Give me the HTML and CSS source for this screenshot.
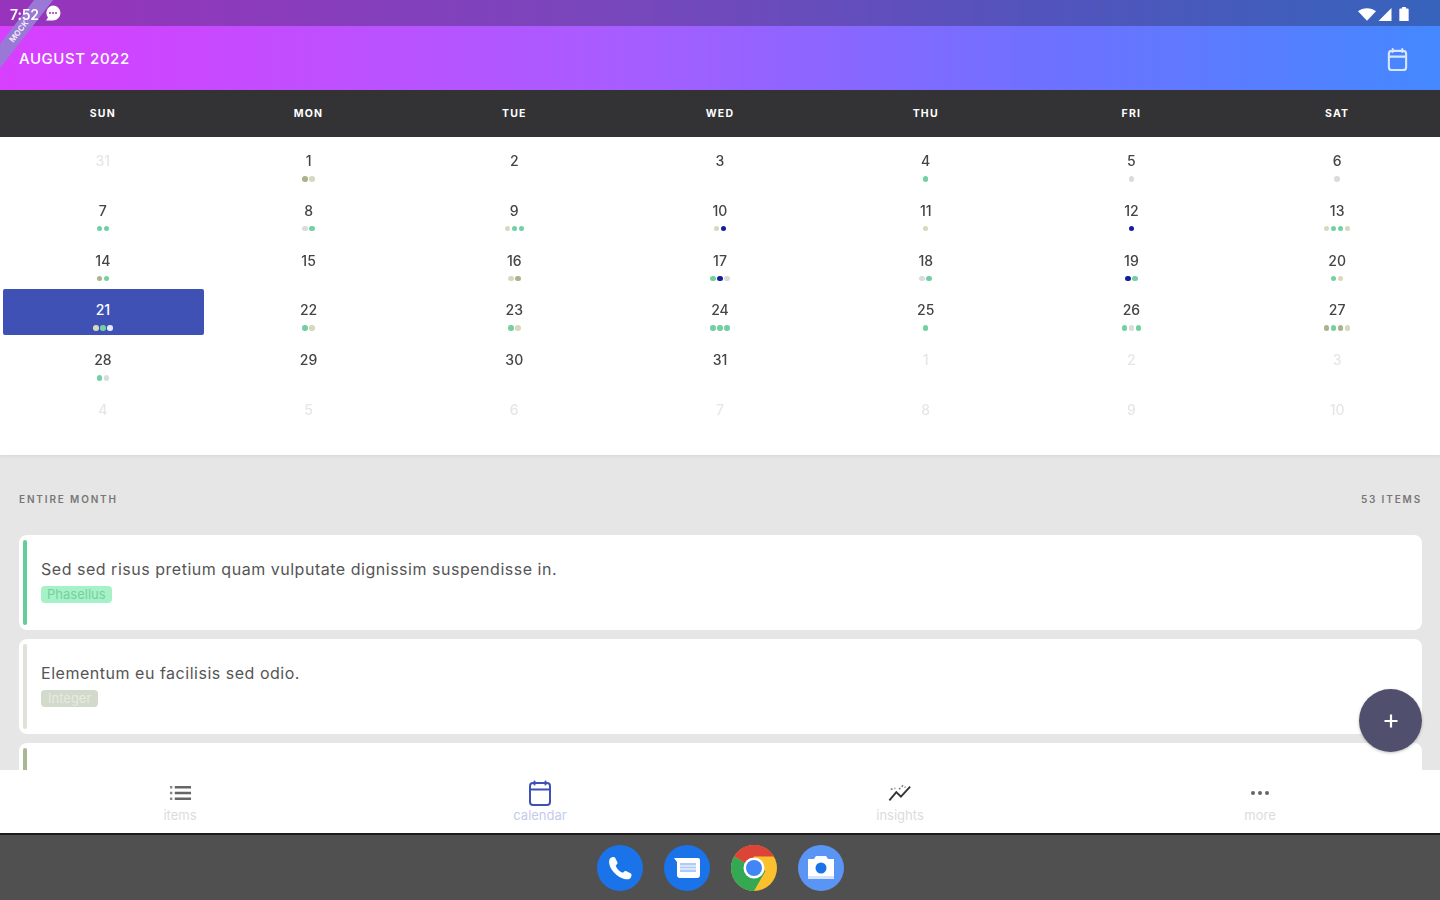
FILE: index.html
```html
<!DOCTYPE html>
<html lang="en">
<head>
<meta charset="utf-8">
<title>Calendar</title>
<link rel="stylesheet" href="styles.css">
</head>
<body>
<div class="screen">
  <header class="top">
    <div class="status">
      <div class="status-left">
        <span class="time">7:52</span>
        <svg class="msg" viewBox="0 0 18 18"><path d="M9 1.5a7.5 7.5 0 0 1 0 15H2l2-3A7.5 7.5 0 0 1 9 1.5z" fill="#fff"/><circle cx="6" cy="9" r="1" fill="#9a35b0"/><circle cx="9" cy="9" r="1" fill="#9a35b0"/><circle cx="12" cy="9" r="1" fill="#9a35b0"/></svg>
      </div>
      <div class="status-right">
        <svg class="st-wifi" viewBox="0 0 20 14"><path d="M0 3.5C5.500-1 14.500-1 20 3.500L10 14z" fill="#fff"/></svg>
        <svg class="st-signal" viewBox="0 0 14 14"><path d="M14 0v14H0z" fill="#fff"/></svg>
        <svg class="st-batt" viewBox="0 0 10 15"><path d="M3 0h4v1.500h2a1 1 0 0 1 1 1V15H0V2.500a1 1 0 0 1 1-1h2z" fill="#fff"/></svg>
      </div>
    </div>
    <div class="appbar">
      <h1 class="month">AUGUST 2022</h1>
      <svg class="cal-icon" viewBox="0 0 24 26"><path d="M3 7a3 3 0 0 1 3-3h12a3 3 0 0 1 3 3v14a3 3 0 0 1-3 3H6a3 3 0 0 1-3-3zM3 10h18M7 2v3M17 2v3" fill="none" stroke="#d8e6ff" stroke-width="2.200" stroke-linecap="round"/></svg>
    </div>
  </header>
  <div class="ribbon"><span>MOCK</span></div>

  <div class="weekdays">
    <span>SUN</span><span>MON</span><span>TUE</span><span>WED</span><span>THU</span><span>FRI</span><span>SAT</span>
  </div>

  <section class="calendar">
    <div class="day off"><b>31</b></div>
    <div class="day"><b>1</b><i class="dots"><u class="o"></u><u class="p"></u></i></div>
    <div class="day"><b>2</b></div>
    <div class="day"><b>3</b></div>
    <div class="day"><b>4</b><i class="dots"><u class="g"></u></i></div>
    <div class="day"><b>5</b><i class="dots"><u class="s"></u></i></div>
    <div class="day"><b>6</b><i class="dots"><u class="s"></u></i></div>

    <div class="day"><b>7</b><i class="dots"><u class="g"></u><u class="g"></u></i></div>
    <div class="day"><b>8</b><i class="dots"><u class="s"></u><u class="g"></u></i></div>
    <div class="day"><b>9</b><i class="dots"><u class="p"></u><u class="g"></u><u class="g"></u></i></div>
    <div class="day"><b>10</b><i class="dots"><u class="p"></u><u class="n"></u></i></div>
    <div class="day"><b>11</b><i class="dots"><u class="p"></u></i></div>
    <div class="day"><b>12</b><i class="dots"><u class="n"></u></i></div>
    <div class="day"><b>13</b><i class="dots"><u class="p"></u><u class="g"></u><u class="g"></u><u class="p"></u></i></div>

    <div class="day"><b>14</b><i class="dots"><u class="o"></u><u class="g"></u></i></div>
    <div class="day"><b>15</b></div>
    <div class="day"><b>16</b><i class="dots"><u class="p"></u><u class="o"></u></i></div>
    <div class="day"><b>17</b><i class="dots"><u class="g"></u><u class="n"></u><u class="s"></u></i></div>
    <div class="day"><b>18</b><i class="dots"><u class="s"></u><u class="g"></u></i></div>
    <div class="day"><b>19</b><i class="dots"><u class="n"></u><u class="g"></u></i></div>
    <div class="day"><b>20</b><i class="dots"><u class="g"></u><u class="p"></u></i></div>

    <div class="day selected"><b>21</b><i class="dots"><u class="p"></u><u class="g"></u><u class="w"></u></i></div>
    <div class="day"><b>22</b><i class="dots"><u class="g"></u><u class="p"></u></i></div>
    <div class="day"><b>23</b><i class="dots"><u class="g"></u><u class="p"></u></i></div>
    <div class="day"><b>24</b><i class="dots"><u class="g"></u><u class="g"></u><u class="g"></u></i></div>
    <div class="day"><b>25</b><i class="dots"><u class="g"></u></i></div>
    <div class="day"><b>26</b><i class="dots"><u class="g"></u><u class="s"></u><u class="g"></u></i></div>
    <div class="day"><b>27</b><i class="dots"><u class="o"></u><u class="g"></u><u class="o"></u><u class="p"></u></i></div>

    <div class="day"><b>28</b><i class="dots"><u class="g"></u><u class="s"></u></i></div>
    <div class="day"><b>29</b></div>
    <div class="day"><b>30</b></div>
    <div class="day"><b>31</b></div>
    <div class="day off"><b>1</b></div>
    <div class="day off"><b>2</b></div>
    <div class="day off"><b>3</b></div>

    <div class="day off"><b>4</b></div>
    <div class="day off"><b>5</b></div>
    <div class="day off"><b>6</b></div>
    <div class="day off"><b>7</b></div>
    <div class="day off"><b>8</b></div>
    <div class="day off"><b>9</b></div>
    <div class="day off"><b>10</b></div>
  </section>

  <section class="list">
    <div class="list-head"><span>ENTIRE MONTH</span><span>53 ITEMS</span></div>
    <article class="card">
      <div class="bar bar-green"></div>
      <div class="card-body">
        <p class="card-text">Sed sed risus pretium quam vulputate dignissim suspendisse in.</p>
        <span class="tag tag-green">Phasellus</span>
      </div>
    </article>
    <article class="card">
      <div class="bar bar-pale"></div>
      <div class="card-body">
        <p class="card-text">Elementum eu facilisis sed odio.</p>
        <span class="tag tag-pale">Integer</span>
      </div>
    </article>
    <article class="card">
      <div class="bar bar-olive"></div>
    </article>
  </section>

  <button class="fab" aria-label="add"><svg viewBox="0 0 16 16"><path d="M8 1.500v13M1.500 8h13" stroke="#fff" stroke-width="2.200" fill="none"/></svg></button>

  <nav class="nav">
    <div class="nav-item">
      <svg class="nav-list" viewBox="0 0 24 18"><path d="M6 3h17M6 9h17M6 15h17" stroke="#666" stroke-width="2.600"/><path d="M1 3h2.500M1 9h2.500M1 15h2.500" stroke="#888" stroke-width="2.600"/></svg>
      <span>items</span>
    </div>
    <div class="nav-item active">
      <svg class="nav-cal" viewBox="0 0 24 26"><path d="M2 6a3 3 0 0 1 3-3h14a3 3 0 0 1 3 3v16a3 3 0 0 1-3 3H5a3 3 0 0 1-3-3zM2 9.500h20M6.500 1.500v3M17.500 1.500v3" fill="none" stroke="#3f51b5" stroke-width="2" stroke-linecap="round"/></svg>
      <span>calendar</span>
    </div>
    <div class="nav-item">
      <svg viewBox="0 0 26 20"><path d="M1.500 18L9 9l5 5 10-11" fill="none" stroke="#333" stroke-width="2"/><path d="M3 6l5-1M12 6l4-4 3 2" fill="none" stroke="#777" stroke-width="1.600" stroke-dasharray="2 2"/></svg>
      <span>insights</span>
    </div>
    <div class="nav-item">
      <svg viewBox="0 0 24 18"><circle cx="5" cy="9" r="2" fill="#666"/><circle cx="12" cy="9" r="2" fill="#666"/><circle cx="19" cy="9" r="2" fill="#666"/></svg>
      <span>more</span>
    </div>
  </nav>

  <footer class="dock">
    <svg class="app" viewBox="0 0 46 46"><circle cx="23" cy="23" r="23" fill="#1a73e8"/><path d="M13 13.500c1-1.500 4-2 5-1l2.500 5c.3 1-.5 2-1.800 3 1 3.500 3.800 6.300 7.300 7.300 1-1.300 2-2 3-1.800l5 2.500c1 1 .5 4-1 5-2 1.500-6 1-10.500-1.500-4-2.500-7.500-6-9.500-10.500C11.800 18 11.800 15 13 13.500z" fill="#fff"/></svg>
    <svg class="app" viewBox="0 0 46 46"><circle cx="23" cy="23" r="23" fill="#1a73e8"/><path d="M10 13h24a2 2 0 0 1 2 2v15a3 3 0 0 1-3 3H16a3 3 0 0 1-3-3V17z" fill="#fff"/><path d="M16 18h16v9H16z" fill="#aecbfa"/><path d="M16 21h16M16 24h16" stroke="#fff" stroke-width="1"/></svg>
    <svg class="app" viewBox="0 0 46 46"><circle cx="23" cy="23" r="23" fill="#fbc02d"/><path d="M23 23L3.100 11.500A23 23 0 0 1 43 11.500H23z" fill="#db4437"/><path d="M23 23L3.100 11.500A23 23 0 0 0 23 46L34.500 26z" fill="#34a853"/><circle cx="23" cy="23" r="10.500" fill="#fff"/><circle cx="23" cy="23" r="8" fill="#4285f4"/></svg>
    <svg class="app" viewBox="0 0 46 46"><circle cx="23" cy="23" r="23" fill="#5a95f5"/><path d="M10 14h6l2-3h10l2 3h6v20H10z" fill="#fff"/><circle cx="23" cy="23" r="5.500" fill="#1a73e8"/><path d="M10 31h26v3H10z" fill="#d7e3fb"/></svg>
  </footer>
</div>
</body>
</html>
```
FILE: styles.css
```css
* { box-sizing: border-box; }
html, body { margin: 0; padding: 0; }
body { background: #fff; font-family: "Inter", "Liberation Sans", sans-serif; }

.screen {
  position: relative;
  width: 1440px;
  height: 900px;
  overflow: hidden;
  display: flex;
  flex-direction: column;
  filter: blur(0.75px);
}

.top {
  height: 90px;
  flex: none;
  background: linear-gradient(90deg, #d83fff 0%, #a95cff 42%, #6f70ff 72%, #4488ff 100%);
  color: #fff;
}
.status {
  height: 26px;
  display: flex;
  justify-content: space-between;
  align-items: center;
  padding: 2px 31px 0 10px;
  background: rgba(30, 30, 60, 0.34);
}
.status-left, .status-right { display: flex; align-items: center; }
.status-left { position: relative; z-index: 2; }
.time { font-size: 14px; font-weight: 600; letter-spacing: -0.2px; }
.msg { width: 18px; height: 18px; margin-left: 5px; margin-top: -2px; }
.st-wifi { width: 18px; height: 13px; margin-right: 2px; }
.st-signal { width: 14px; height: 13px; margin-right: 7px; }
.st-batt { width: 10px; height: 14px; }

.appbar {
  height: 64px;
  display: flex;
  justify-content: space-between;
  align-items: center;
  padding: 0 31px 0 19px;
}
.month { margin: 0; font-size: 15px; font-weight: 500; letter-spacing: 0.550px; }
.cal-icon { width: 23px; height: 25px; margin-top: 3px; }

.ribbon {
  position: absolute;
  left: -31px;
  top: 24px;
  width: 100px;
  height: 15px;
  background: #9a78d6;
  transform: rotate(-52deg);
  text-align: center;
  color: #f0eafa;
  font-size: 8px;
  font-weight: 700;
  line-height: 15px;
}

.weekdays {
  height: 47px;
  flex: none;
  display: grid;
  grid-template-columns: repeat(7, 1fr);
  align-items: center;
  background: #333336;
  color: #fff;
  font-size: 10.500px;
  font-weight: 700;
  letter-spacing: 1.200px;
  text-align: center;
}

.calendar {
  height: 318px;
  flex: none;
  display: grid;
  grid-template-columns: repeat(7, 1fr);
  grid-auto-rows: 49.800px;
  align-content: start;
  background: #fff;
  box-shadow: 0 1px 3px rgba(0, 0, 0, 0.08);
  z-index: 1;
}
.day {
  display: flex;
  flex-direction: column;
  align-items: center;
  padding-top: 16px;
  color: #444;
}
.day b { font-size: 14px; font-weight: 500; line-height: 16px; }
.dots { display: flex; gap: 1.500px; margin-top: 7px; }
.dots u { width: 5.500px; height: 5.500px; border-radius: 50%; display: block; text-decoration: none; }
.g { background: #72d0a4; }
.p { background: #d6d9ba; }
.o { background: #a9b48c; }
.s { background: #d9dcd9; }
.n { background: #14209a; }
.w { background: #e6e8f8; }
.off { color: #e6e6e6; }

.selected {
  color: #fff;
  position: relative;
  padding: 0;
}
.selected::before {
  content: "";
  position: absolute;
  left: 3px;
  right: 2px;
  top: 3px;
  bottom: 1px;
  background: #3f51b5;
  border-radius: 2px;
}
.selected b { position: relative; margin-top: 16px; }
.selected .dots { position: relative; }

.list {
  flex: 1;
  min-height: 0;
  overflow: hidden;
  background: #e6e6e6;
  padding: 36px 18px 0 19px;
}
.list-head {
  display: flex;
  justify-content: space-between;
  height: 16px;
  line-height: 16px;
  font-size: 10px;
  font-weight: 600;
  letter-spacing: 1.850px;
  color: #777;
  margin-bottom: 28px;
}
.card {
  height: 95px;
  margin-bottom: 9px;
  background: #fff;
  border-radius: 8px;
  padding: 5px 4px;
  display: flex;
}
.bar { width: 4px; border-radius: 2px; flex: none; }
.bar-green { background: #66cc99; }
.bar-pale { background: #dfe2d8; }
.bar-olive { background: #a9b894; }
.card-body { padding: 19px 0 0 14px; }
.card-text {
  margin: 0;
  font-size: 16px;
  line-height: 20px;
  color: #555;
  letter-spacing: 0.520px;
}
.tag {
  display: inline-block;
  height: 17px;
  margin-top: 7px;
  padding: 0 6px;
  border-radius: 4px;
  font-size: 13px;
  line-height: 17px;
}
.tag-green { background: #a6f2c8; color: #78cfa0; }
.tag-pale { background: #d2dacb; color: #e6ebe2; padding: 0 7px; }

.fab {
  position: absolute;
  left: 1359px;
  top: 689px;
  width: 63px;
  height: 63px;
  border: 0;
  border-radius: 50%;
  padding: 0;
  display: flex;
  align-items: center;
  justify-content: center;
  background: #50506e;
  box-shadow: 0 1px 3px rgba(0, 0, 0, 0.25);
}
.fab svg { width: 16px; height: 16px; }

.nav {
  height: 63px;
  flex: none;
  display: grid;
  grid-template-columns: repeat(4, 1fr);
  background: #fff;
}
.nav-item {
  display: flex;
  flex-direction: column;
  align-items: center;
  padding-top: 12px;
  color: #dcdcdc;
  font-size: 13px;
  line-height: 16px;
}
.nav-item svg { width: 24px; height: 22px; margin-bottom: 3px; }
.nav-item.active { color: #c5cbea; padding-top: 10px; }
.nav-item .nav-cal { width: 24px; height: 26px; margin-bottom: 1px; }
.nav-item .nav-list { width: 23px; height: 18px; margin: 2px 0 5px; }

.dock {
  height: 67px;
  flex: none;
  display: flex;
  justify-content: center;
  align-items: center;
  gap: 21px;
  padding-left: 1px;
  background: #505050;
  border-top: 2px solid #1c1c1c;
}
.app { width: 46px; height: 46px; }
```
